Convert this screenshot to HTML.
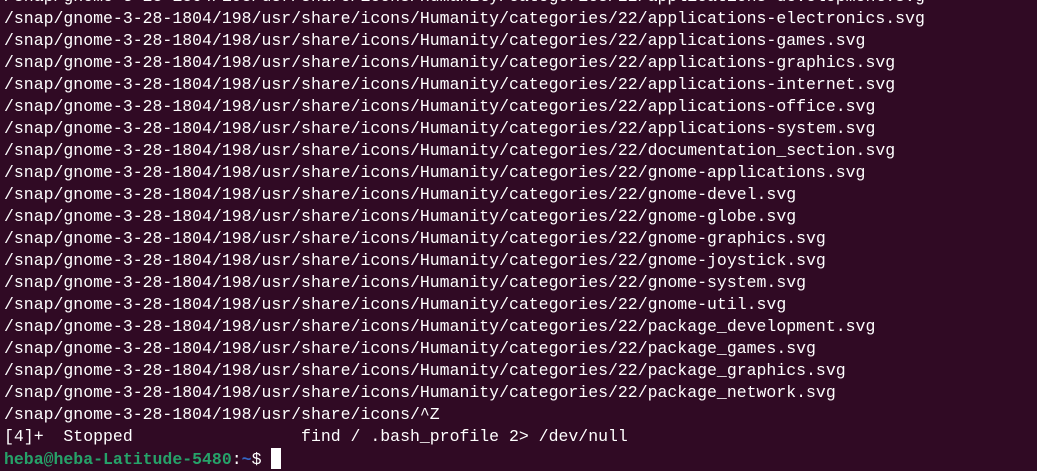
<!DOCTYPE html>
<html><head><meta charset="utf-8"><style>
html,body{margin:0;padding:0;width:1037px;height:469px;overflow:hidden;background:#300a24;}
pre{position:absolute;left:4px;top:-14px;margin:0;font-family:"Liberation Mono",monospace;font-size:16.5px;line-height:22px;color:#ffffff;white-space:pre;}
.g{color:#26a269;font-weight:bold}.b{color:#3465c4;font-weight:bold}
.c{display:inline-block;width:10px;height:21px;background:#fff;vertical-align:-5px}
</style></head><body><pre>/snap/gnome-3-28-1804/198/usr/share/icons/Humanity/categories/22/applications-development.svg
/snap/gnome-3-28-1804/198/usr/share/icons/Humanity/categories/22/applications-electronics.svg
/snap/gnome-3-28-1804/198/usr/share/icons/Humanity/categories/22/applications-games.svg
/snap/gnome-3-28-1804/198/usr/share/icons/Humanity/categories/22/applications-graphics.svg
/snap/gnome-3-28-1804/198/usr/share/icons/Humanity/categories/22/applications-internet.svg
/snap/gnome-3-28-1804/198/usr/share/icons/Humanity/categories/22/applications-office.svg
/snap/gnome-3-28-1804/198/usr/share/icons/Humanity/categories/22/applications-system.svg
/snap/gnome-3-28-1804/198/usr/share/icons/Humanity/categories/22/documentation_section.svg
/snap/gnome-3-28-1804/198/usr/share/icons/Humanity/categories/22/gnome-applications.svg
/snap/gnome-3-28-1804/198/usr/share/icons/Humanity/categories/22/gnome-devel.svg
/snap/gnome-3-28-1804/198/usr/share/icons/Humanity/categories/22/gnome-globe.svg
/snap/gnome-3-28-1804/198/usr/share/icons/Humanity/categories/22/gnome-graphics.svg
/snap/gnome-3-28-1804/198/usr/share/icons/Humanity/categories/22/gnome-joystick.svg
/snap/gnome-3-28-1804/198/usr/share/icons/Humanity/categories/22/gnome-system.svg
/snap/gnome-3-28-1804/198/usr/share/icons/Humanity/categories/22/gnome-util.svg
/snap/gnome-3-28-1804/198/usr/share/icons/Humanity/categories/22/package_development.svg
/snap/gnome-3-28-1804/198/usr/share/icons/Humanity/categories/22/package_games.svg
/snap/gnome-3-28-1804/198/usr/share/icons/Humanity/categories/22/package_graphics.svg
/snap/gnome-3-28-1804/198/usr/share/icons/Humanity/categories/22/package_network.svg
/snap/gnome-3-28-1804/198/usr/share/icons/^Z
[4]+  Stopped                 find / .bash_profile 2&gt; /dev/null
<span class="g">heba@heba-Latitude-5480</span>:<span class="b">~</span>$ <span class="c"></span></pre></body></html>
